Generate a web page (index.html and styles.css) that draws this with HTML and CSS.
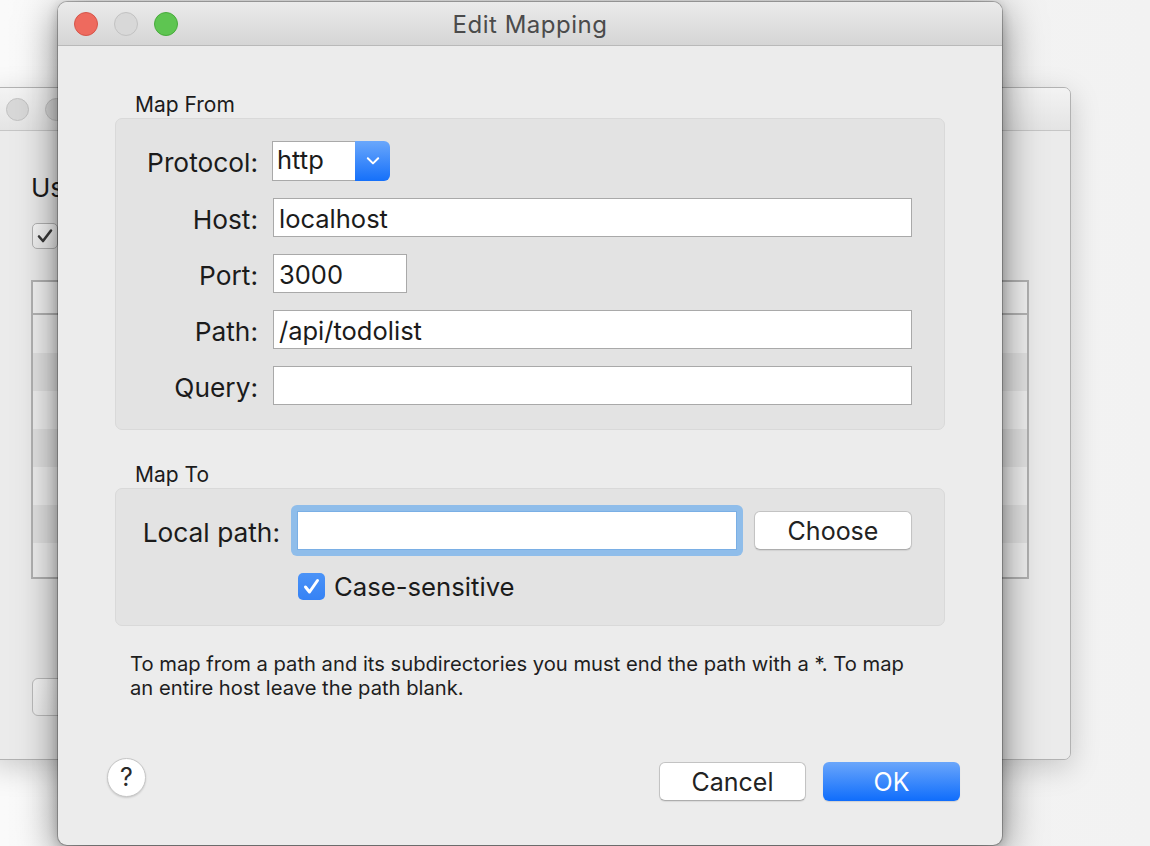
FILE: index.html
```html
<!DOCTYPE html>
<html lang="en">
<head>
<meta charset="utf-8">
<title>Edit Mapping</title>
<link rel="stylesheet" href="styles.css">
</head>
<body>
<div class="desktop">
  <div class="bgwin">
    <div class="bg-titlebar">
      <span class="light light-off"></span>
      <span class="light light-off"></span>
      <span class="light light-off"></span>
    </div>
    <div class="bg-body">
      <div class="bg-heading">Use</div>
      <div class="bg-check-row">
        <span class="bg-check">
          <svg viewBox="0 0 26 26" width="26" height="26"><path d="M7 13.5 L11 18 L19 7.5" fill="none" stroke="#3a3a3a" stroke-width="2.6" stroke-linecap="round" stroke-linejoin="round"/></svg>
        </span>
      </div>
      <div class="bg-table">
        <div class="bg-thead"><span class="bg-th"></span><span class="bg-th"></span></div>
        <div class="bg-row"></div>
        <div class="bg-row alt"></div>
        <div class="bg-row"></div>
        <div class="bg-row alt"></div>
        <div class="bg-row"></div>
        <div class="bg-row alt"></div>
        <div class="bg-row last"></div>
      </div>
      <div class="bg-buttons">
        <span class="bg-btn"></span>
        <span class="bg-btn"></span>
      </div>
    </div>
  </div>

  <div class="dialog">
    <div class="titlebar">
      <div class="lights">
        <span class="light light-red"></span>
        <span class="light light-off"></span>
        <span class="light light-green"></span>
      </div>
      <div class="title">Edit Mapping</div>
    </div>
    <div class="dlg-body">
      <div class="section-label">Map From</div>
      <div class="group">
        <div class="form-grid">
          <label class="lbl">Protocol:</label>
          <div class="popup">
            <span class="popup-value">http</span>
            <span class="popup-arrow">
              <svg viewBox="0 0 14 10" width="14" height="10"><path d="M1.8 2.2 L7 7.4 L12.2 2.2" fill="none" stroke="#fff" stroke-width="2" stroke-linecap="round" stroke-linejoin="round"/></svg>
            </span>
          </div>
          <label class="lbl">Host:</label>
          <div class="field">localhost</div>
          <label class="lbl">Port:</label>
          <div class="field field-port">3000</div>
          <label class="lbl">Path:</label>
          <div class="field">/api/todolist</div>
          <label class="lbl">Query:</label>
          <div class="field"></div>
        </div>
      </div>

      <div class="section-label section-label-to">Map To</div>
      <div class="group">
        <div class="to-grid">
          <label class="lbl">Local path:</label>
          <div class="focus-ring"><div class="field field-focus"></div></div>
          <button class="btn btn-choose">Choose</button>
          <div class="check-row">
            <span class="checkbox">
              <svg viewBox="0 0 27 27" width="27" height="27"><path d="M7.5 14 L11.5 19 L19.5 7.5" fill="none" stroke="#fff" stroke-width="3" stroke-linecap="round" stroke-linejoin="round"/></svg>
            </span>
            <span class="check-label">Case-sensitive</span>
          </div>
        </div>
      </div>

      <p class="help-text">To map from a path and its subdirectories you must end the path with a *. To map an entire host leave the path blank.</p>

      <div class="footer">
        <button class="help-btn">?</button>
        <div class="footer-actions">
          <button class="btn btn-cancel">Cancel</button>
          <button class="btn btn-ok">OK</button>
        </div>
      </div>
    </div>
  </div>
</div>
</body>
</html>
```

FILE: styles.css
```css
* { box-sizing: border-box; }

html, body {
  margin: 0;
  padding: 0;
}

body {
  font-family: Inter, "Noto Sans", "Liberation Sans", sans-serif;
  color: #1b1b1b;
  background: #f5f5f5;
}

.desktop {
  position: relative;
  width: 1150px;
  height: 846px;
  overflow: hidden;
  background: linear-gradient(90deg, #fafafa 0%, #f4f4f4 60%, #f2f2f2 100%);
}

/* ---------- background window ---------- */
.bgwin {
  position: absolute;
  left: -10px;
  top: 87px;
  width: 1081px;
  height: 673px;
  border: 1px solid #b2b2b2;
  border-radius: 7px;
  background: #ececec;
  overflow: hidden;
  display: flex;
  flex-direction: column;
  box-shadow: 0 8px 30px rgba(0, 0, 0, 0.18);
}

.bg-titlebar {
  height: 43px;
  flex: none;
  display: flex;
  align-items: center;
  gap: 16px;
  padding-left: 15px;
  background: linear-gradient(#f3f3f3, #e4e4e4);
  border-bottom: 1px solid #c6c6c6;
}

.bg-titlebar .light {
  width: 23px;
  height: 23px;
}

.bg-body {
  flex: 1;
  display: flex;
  flex-direction: column;
  padding: 42px 41px 43px 40px;
  background: #ebebeb;
}

.bg-heading {
  font-size: 26px;
  line-height: 30px;
  white-space: nowrap;
}

.bg-check-row {
  margin-top: 20px;
  display: flex;
  align-items: center;
  gap: 10px;
  padding-left: 1px;
}

.bg-check {
  width: 26px;
  height: 26px;
  border: 1px solid #b3b3b3;
  border-radius: 5px;
  background: linear-gradient(#fafafa, #eeeeee);
  display: flex;
}

.bg-check svg { display: block; margin: -1px; }

.bg-table {
  margin-top: 31px;
  height: 299px;
  border: 2px solid #b2b2b2;
  background: #f1f1f1;
  display: flex;
  flex-direction: column;
}

.bg-thead {
  height: 33px;
  flex: none;
  border-bottom: 2px solid #b4b4b4;
  background: #f3f3f3;
  display: flex;
}

.bg-th { flex: 1; }

.bg-row {
  height: 38px;
  flex: none;
  background: #f0f0f0;
}

.bg-row.alt { background: #e3e3e3; }
.bg-row.last { flex: 1; }

.bg-buttons {
  margin-top: auto;
  display: flex;
  justify-content: space-between;
  padding: 0 54px 0 1px;
}

.bg-btn {
  width: 150px;
  height: 38px;
  border: 1px solid #bcbcbc;
  border-radius: 6px;
  background: linear-gradient(#f7f7f7, #efefef);
}

/* ---------- traffic lights ---------- */
.light {
  display: block;
  width: 24px;
  height: 24px;
  border-radius: 50%;
  flex: none;
}

.light-red {
  background: #ee6a5e;
  border: 1px solid #d5554a;
}

.light-green {
  background: #5ec551;
  border: 1px solid #48ab3c;
}

.light-off {
  background: #d8d8d8;
  border: 1px solid #c2c2c2;
}

/* ---------- dialog ---------- */
.dialog {
  position: absolute;
  left: 58px;
  top: 2px;
  width: 944px;
  height: 843px;
  border-radius: 9px;
  background: #ececec;
  box-shadow: 0 0 0 1px rgba(0, 0, 0, 0.24), 0 10px 40px rgba(0, 0, 0, 0.5), 0 2px 12px rgba(0, 0, 0, 0.2);
  overflow: hidden;
}

.titlebar {
  position: relative;
  height: 44px;
  background: linear-gradient(#ebebeb, #d5d5d5);
  border-bottom: 1px solid #b9b9b9;
  display: flex;
  align-items: center;
  justify-content: center;
}

.lights {
  position: absolute;
  left: 16px;
  top: 10px;
  display: flex;
  gap: 16px;
}

.title {
  font-size: 24px;
  color: #4b4b4b;
  letter-spacing: 0.5px;
  margin-top: 1px;
}

.dlg-body {
  padding: 46px 57px 0 57px;
}

.section-label {
  font-size: 21px;
  line-height: 25px;
  padding-left: 20px;
  margin-bottom: 1px;
}

.section-label-to {
  margin-top: 32px;
}

.group {
  background: #e3e3e3;
  border: 1px solid #d9d9d9;
  border-radius: 7px;
}

.form-grid {
  display: grid;
  grid-template-columns: 142px 1fr;
  column-gap: 15px;
  row-gap: 17px;
  padding: 22px 32px 24px 0;
  align-items: center;
  justify-items: start;
}

.lbl {
  font-size: 26.3px;
  justify-self: end;
  white-space: nowrap;
  padding-top: 3px;
}

.field {
  width: 100%;
  height: 39px;
  background: #fff;
  border: 1px solid #a9a9a9;
  font-size: 25.5px;
  line-height: 39px;
  padding: 0 5px;
  white-space: nowrap;
}

.field-port {
  width: 134px;
}

.popup {
  display: flex;
  height: 40px;
  margin-left: -1px;
}

.popup-value {
  width: 83px;
  border: 1px solid #a9a9a9;
  border-right: none;
  background: #fff;
  font-size: 25.5px;
  line-height: 36px;
  padding-left: 4px;
}

.popup-arrow {
  width: 35px;
  border-radius: 0 6px 6px 0;
  background: linear-gradient(#6aa7fb, #1570fa);
  display: flex;
  align-items: center;
  justify-content: center;
}

.popup-arrow svg { display: block; }

/* Map To */
.to-grid {
  display: grid;
  grid-template-columns: 164px 1fr 158px;
  column-gap: 11px;
  row-gap: 16px;
  padding: 16px 32px 25px 0;
  align-items: center;
}

.to-grid .lbl {
  justify-self: end;
  padding-top: 4px;
}

.focus-ring {
  padding: 6px;
  border-radius: 6px;
  background: #8fbdea;
}

.field-focus {
  border-color: #7aafe5;
}

.check-row {
  grid-column: 2 / 4;
  display: flex;
  align-items: center;
  gap: 9px;
  margin-left: 7px;
  height: 28px;
}

.checkbox {
  width: 27px;
  height: 27px;
  border-radius: 5px;
  background: linear-gradient(#4b93f7, #3582f5);
  display: flex;
}

.checkbox svg { display: block; }

.check-label {
  font-size: 25.7px;
  line-height: 26px;
  padding-top: 2px;
}

/* buttons */
.btn {
  font-family: inherit;
  font-size: 25px;
  color: #222;
  background: #fff;
  border: 1px solid #c3c3c3;
  border-bottom-color: #adadad;
  border-radius: 6px;
  height: 39px;
  padding: 0;
  box-shadow: 0 1px 1px rgba(0, 0, 0, 0.08);
  cursor: default;
}

.btn-choose {
  width: 158px;
}

.help-text {
  margin: 26px 0 0 15px;
  font-size: 20.2px;
  line-height: 24px;
  color: #1e1e1e;
  max-width: 790px;
}

.footer {
  margin-top: 62px;
  display: flex;
  justify-content: space-between;
  align-items: flex-start;
  margin-left: -8px;
  margin-right: -15px;
}

.help-btn {
  width: 39px;
  height: 39px;
  margin-top: -4px;
  border-radius: 50%;
  border: 1px solid #c6c6c6;
  background: #fff;
  box-shadow: 0 1px 2px rgba(0, 0, 0, 0.15);
  font-family: inherit;
  font-size: 25px;
  color: #2a2a2a;
  padding: 0;
  line-height: 37px;
}

.footer-actions {
  display: flex;
  gap: 17px;
}

.btn-cancel {
  width: 147px;
}

.btn-ok {
  width: 137px;
  border: none;
  color: #fff;
  background: linear-gradient(#6aa6fb, #0f6dfc);
  box-shadow: 0 1px 1px rgba(0, 0, 0, 0.12);
}
```
